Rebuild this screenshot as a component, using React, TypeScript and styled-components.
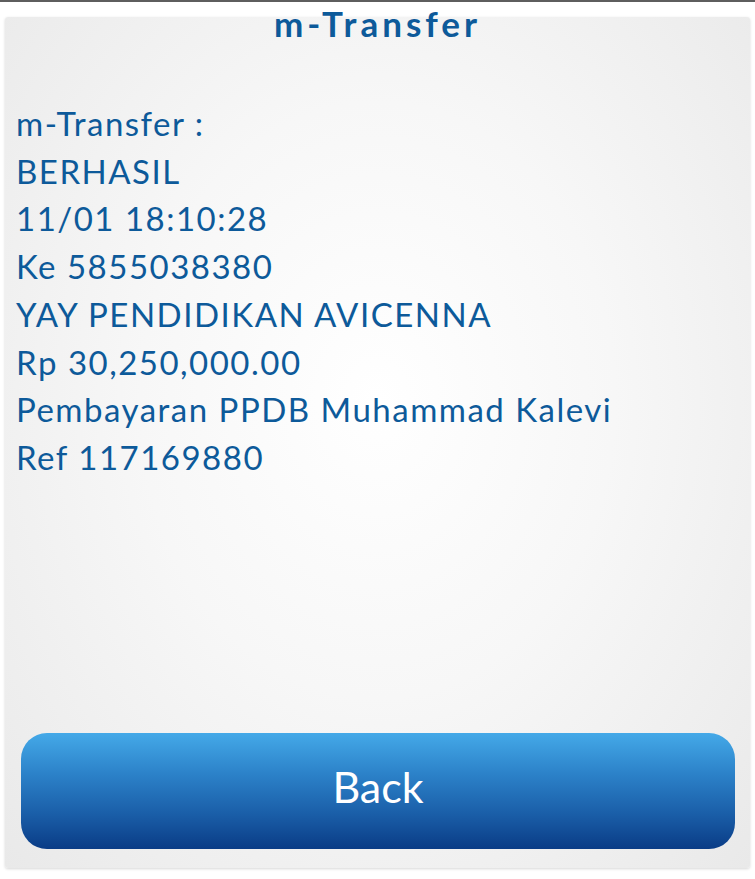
import React from "react";
import styled, { createGlobalStyle } from "styled-components";

const Global = createGlobalStyle`
  html, body { margin: 0; padding: 0; background: #ffffff; }
  body { font-family: "Lato", "Noto Sans", sans-serif; }
`;

const Screen = styled.div`
  width: 755px;
  height: 879px;
  background: #ffffff;
  border-top: 2px solid #5e5e5e;
  box-sizing: border-box;
  padding: 15px 5px 11px 5px;
  display: flex;
`;

const Panel = styled.div`
  flex: 1;
  border-radius: 3px;
  background: radial-gradient(ellipse at 50% 45%, #ffffff 0%, #f7f7f7 45%, #e9e9e9 100%);
  box-shadow: 0 1px 3px rgba(0, 0, 0, 0.16);
  display: flex;
  flex-direction: column;
  padding: 0 15px 19px 11px;
`;

const Title = styled.h1`
  margin: -13px 0 0 0;
  padding-left: 4px;
  text-align: center;
  font-size: 35px;
  font-weight: 700;
  line-height: 38px;
  color: #0d5a9a;
  letter-spacing: 4px;
`;

const Lines = styled.div`
  margin-top: 58px;
  flex: 1;
  display: flex;
  flex-direction: column;
`;

const Line = styled.div`
  font-size: 33px;
  line-height: 47.7px;
  color: #0d5a9a;
  white-space: nowrap;
  letter-spacing: 1.5px;
`;

const BackButton = styled.button`
  margin-left: 5px;
  height: 116px;
  padding: 0 0 10px 0;
  border: none;
  border-radius: 26px;
  background: linear-gradient(180deg, #44a9e8 0%, #2c82c9 35%, #1a5ea8 70%, #0a3c86 100%);
  color: #ffffff;
  font-family: "Lato", "Noto Sans", sans-serif;
  font-size: 43px;
  font-weight: 400;
  cursor: pointer;
`;

const lines = [
  "m-Transfer :",
  "BERHASIL",
  "11/01 18:10:28",
  "Ke 5855038380",
  "YAY PENDIDIKAN AVICENNA",
  "Rp 30,250,000.00",
  "Pembayaran PPDB Muhammad Kalevi",
  "Ref 117169880",
];

export default function App() {
  return (
    <>
      <Global />
      <Screen>
        <Panel>
          <Title>m-Transfer</Title>
          <Lines>
            {lines.map((l) => (
              <Line key={l}>{l}</Line>
            ))}
          </Lines>
          <BackButton>Back</BackButton>
        </Panel>
      </Screen>
    </>
  );
}
